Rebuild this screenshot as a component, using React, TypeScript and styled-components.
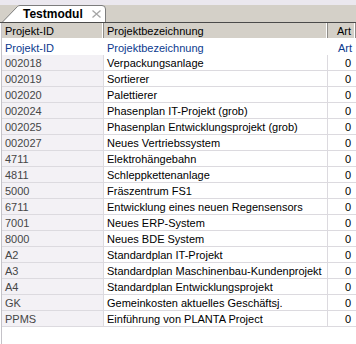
import React from 'react';
import styled, { createGlobalStyle } from 'styled-components';

const GlobalStyle = createGlobalStyle`
    html, body {
        margin: 0;
        padding: 0;
        background: #ffffff;
    }
    body {
        font-family: "Liberation Sans", Arial, sans-serif;
        font-size: 11px;
    }
`;

const Window = styled.div`
    width: 356px;
    height: 344px;
    display: flex;
    flex-direction: column;
    background: #ffffff;
    overflow: hidden;
`;

const TopEdge = styled.div`
    height: 5px;
    background: #ebe8ef;
`;

const TabStrip = styled.div`
    height: 17px;
    display: flex;
    align-items: flex-end;
    background: #d4d0c8;
    border-bottom: 1px solid #4a4a4a;
`;

const Tab = styled.div`
    position: relative;
    width: 104px;
    height: 17px;
    margin-left: 2px;
    display: flex;
    align-items: center;
    gap: 9px;
    padding-left: 21px;
    box-sizing: border-box;
`;

const TabShape = styled.svg`
    position: absolute;
    left: 0;
    top: 0;
`;

const TabLabel = styled.span`
    position: relative;
    font-size: 12px;
    font-weight: bold;
    color: #000;
    padding-top: 1px;
`;

const CloseIcon = styled.svg`
    position: relative;
    margin-top: 1px;
`;

const Grid = styled.div`
    flex: 1;
    display: grid;
    grid-template-columns: 102px 224px 1fr;
    grid-auto-rows: 16px;
    align-content: start;
    margin-left: 1px;
    border-left: 1px solid #c4c2c8;
`;

const HeadCell = styled.div<{ $align?: 'left' | 'right' }>`
    height: 15px;
    display: flex;
    align-items: center;
    justify-content: ${p => (p.$align === 'right' ? 'flex-end' : 'flex-start')};
    padding: 0 4px 0 3px;
    background: #d4d0c8;
    border-right: 1px solid #8e8c88;
    box-shadow: inset -1px 0 0 #ffffff;
    color: #000;
    &:last-of-type {
        border-right: none;
        box-shadow: none;
    }
`;

const LabelCell = styled.div<{ $align?: 'left' | 'right' }>`
    height: 18px;
    display: flex;
    align-items: center;
    justify-content: ${p => (p.$align === 'right' ? 'flex-end' : 'flex-start')};
    padding: 0 4px 0 3px;
    color: #0c3a8e;
    background: #fff;
`;

const Cell = styled.div<{ $kind: 'id' | 'name' | 'art' }>`
    display: flex;
    align-items: center;
    justify-content: ${p => (p.$kind === 'art' ? 'flex-end' : 'flex-start')};
    padding: 0 5px 0 3px;
    border-bottom: 1px solid #dcdadf;
    border-right: ${p => (p.$kind === 'art' ? 'none' : '1px solid #dcdadf')};
    background: ${p => (p.$kind === 'id' ? '#f3f1f5' : '#ffffff')};
    color: ${p => (p.$kind === 'id' ? '#464646' : '#000')};
    white-space: nowrap;
    overflow: hidden;
`;

const rows: [string, string, number][] = [
    ['002018', 'Verpackungsanlage', 0],
    ['002019', 'Sortierer', 0],
    ['002020', 'Palettierer', 0],
    ['002024', 'Phasenplan IT-Projekt (grob)', 0],
    ['002025', 'Phasenplan Entwicklungsprojekt (grob)', 0],
    ['002027', 'Neues Vertriebssystem', 0],
    ['4711', 'Elektrohängebahn', 0],
    ['4811', 'Schleppkettenanlage', 0],
    ['5000', 'Fräszentrum FS1', 0],
    ['6711', 'Entwicklung eines neuen Regensensors', 0],
    ['7001', 'Neues ERP-System', 0],
    ['8000', 'Neues BDE System', 0],
    ['A2', 'Standardplan IT-Projekt', 0],
    ['A3', 'Standardplan Maschinenbau-Kundenprojekt', 0],
    ['A4', 'Standardplan Entwicklungsprojekt', 0],
    ['GK', 'Gemeinkosten aktuelles Geschäftsj.', 0],
    ['PPMS', 'Einführung von PLANTA Project', 0],
];

export default function App() {
    return (
        <Window>
            <GlobalStyle />
            <TopEdge />
            <TabStrip>
                <Tab>
                    <TabShape width="104" height="17" viewBox="0 0 104 17">
                        <path
                            d="M0.5 17 L15.5 1.5 Q16.5 0.5 18 0.5 L100 0.5 Q103.5 0.5 103.5 4 L103.5 17"
                            fill="#ffffff"
                            stroke="#7c7c7c"
                        />
                    </TabShape>
                    <TabLabel>Testmodul</TabLabel>
                    <CloseIcon width="9" height="8" viewBox="0 0 9 8">
                        <path d="M0.5 0.5 L8.5 7.5 M8.5 0.5 L0.5 7.5" stroke="#a6a6a6" strokeWidth="1.3" />
                    </CloseIcon>
                </Tab>
            </TabStrip>
            <Grid>
                <HeadCell>Projekt-ID</HeadCell>
                <HeadCell>Projektbezeichnung</HeadCell>
                <HeadCell $align="right">Art</HeadCell>
                <LabelCell>Projekt-ID</LabelCell>
                <LabelCell>Projektbezeichnung</LabelCell>
                <LabelCell $align="right">Art</LabelCell>
                {rows.map(([id, name, art]) => (
                    <React.Fragment key={id}>
                        <Cell $kind="id">{id}</Cell>
                        <Cell $kind="name">{name}</Cell>
                        <Cell $kind="art">{art}</Cell>
                    </React.Fragment>
                ))}
            </Grid>
        </Window>
    );
}
